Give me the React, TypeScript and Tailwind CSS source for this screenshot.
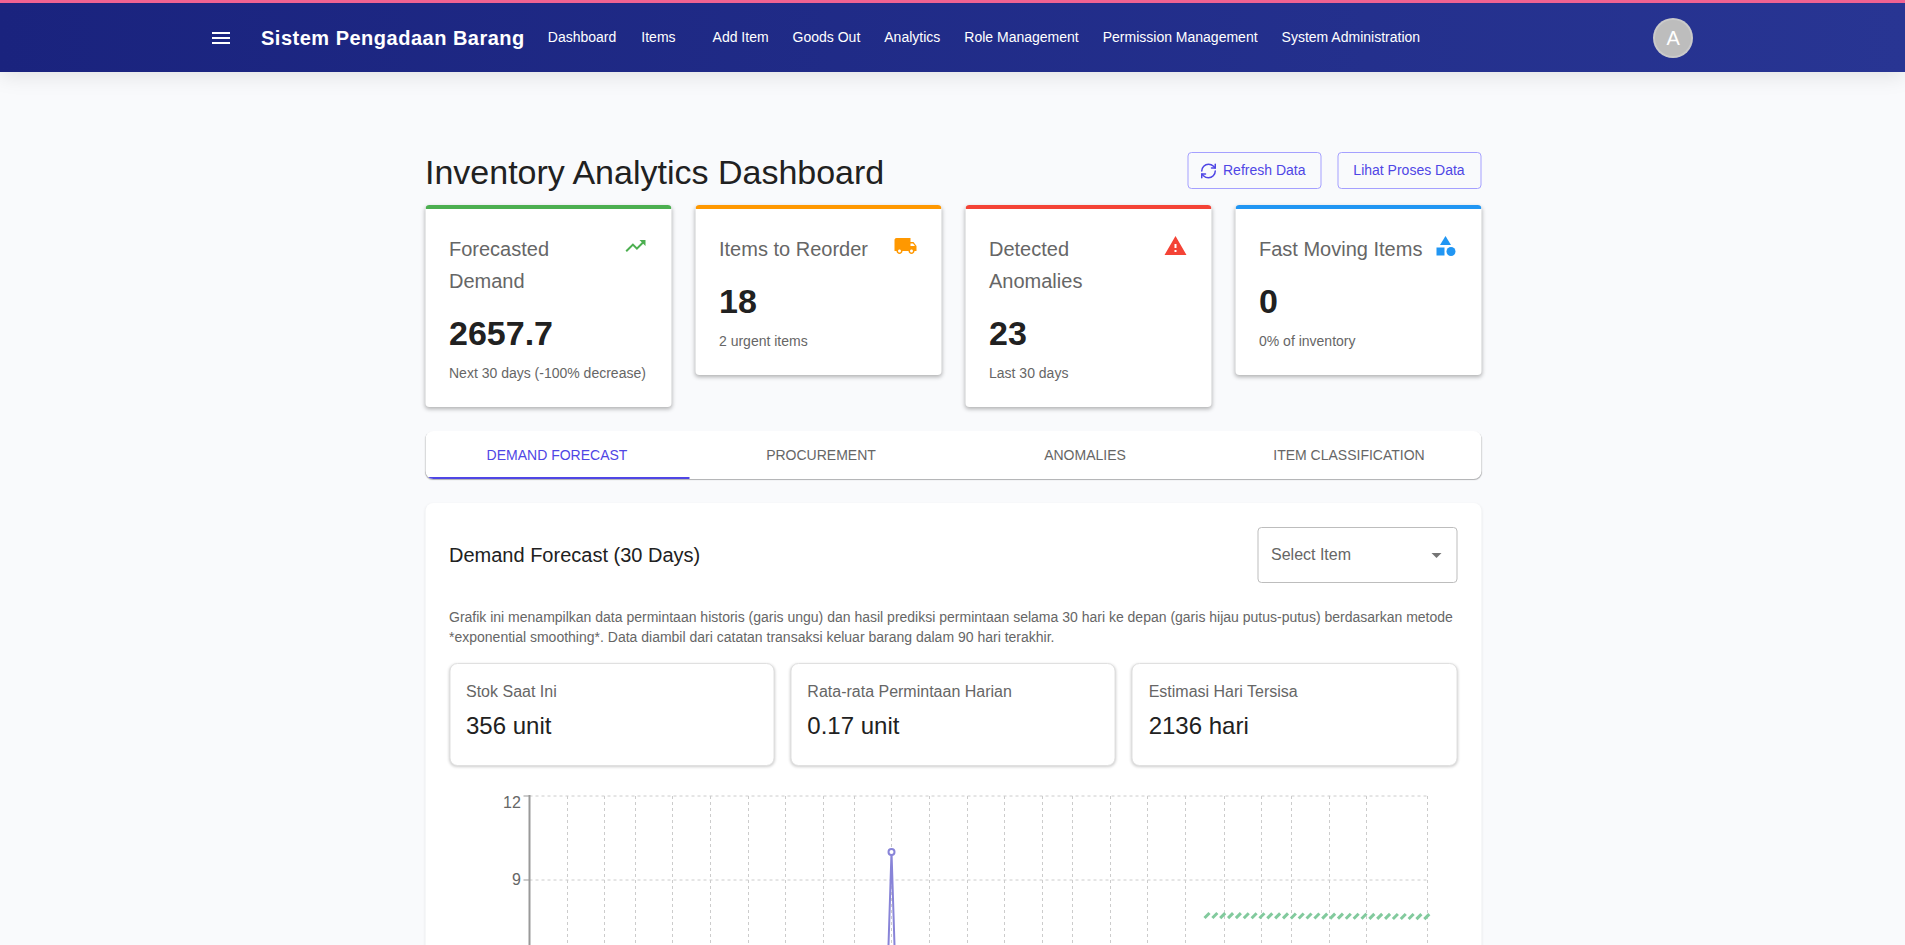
import React from "react";
import { MdMenu, MdTrendingUp, MdLocalShipping, MdWarning, MdCategory, MdArrowDropDown } from "react-icons/md";
import { RefreshCw } from "lucide-react";

const navItems = [
  { label: "Dashboard", className: "ml-[23px]" },
  { label: "Items", className: "ml-[25px]" },
  { label: "Add Item", className: "ml-[37px]" },
  { label: "Goods Out", className: "ml-[24px]" },
  { label: "Analytics", className: "ml-[24px]" },
  { label: "Role Management", className: "ml-[24px]" },
  { label: "Permission Management", className: "ml-[24px]" },
  { label: "System Administration", className: "ml-[24px]" },
];

const summaryCards = [
  {
    title: "Forecasted Demand",
    value: "2657.7",
    caption: "Next 30 days (-100% decrease)",
    border: "border-t-[#4caf50]",
    icon: <MdTrendingUp className="text-[#4caf50]" size={24} />,
  },
  {
    title: "Items to Reorder",
    value: "18",
    caption: "2 urgent items",
    border: "border-t-[#ff9800]",
    icon: <MdLocalShipping className="text-[#ff9800]" size={24} />,
  },
  {
    title: "Detected Anomalies",
    value: "23",
    caption: "Last 30 days",
    border: "border-t-[#f44336]",
    icon: <MdWarning className="text-[#f44336]" size={24} />,
  },
  {
    title: "Fast Moving Items",
    value: "0",
    caption: "0% of inventory",
    border: "border-t-[#2196f3]",
    icon: <MdCategory className="text-[#2196f3]" size={24} />,
  },
];

const tabs = ["Demand Forecast", "Procurement", "Anomalies", "Item Classification"];

const stats = [
  { label: "Stok Saat Ini", value: "356 unit" },
  { label: "Rata-rata Permintaan Harian", value: "0.17 unit" },
  { label: "Estimasi Hari Tersisa", value: "2136 hari" },
];

// x positions of the vertical grid lines, relative to the chart's left edge
const gridX = [
  38, 75, 106, 143, 181, 219, 256, 294, 325, 362, 400, 438, 475, 513, 543, 581, 618, 656, 695, 732,
  762, 800, 837, 898,
];

function ForecastChart() {
  const hatch = Array.from({ length: 29 }, (_, i) => 675 + i * 7.85);
  return (
    <svg width="960" height="300" viewBox="0 0 960 300" className="block overflow-visible">
      {gridX.map((x) => (
        <line key={x} x1={x} x2={x} y1={10} y2={300} stroke="#ccc" strokeDasharray="3 3" />
      ))}
      <line x1={0} x2={898} y1={10} y2={10} stroke="#ccc" strokeDasharray="3 3" />
      <line x1={0} x2={898} y1={94} y2={94} stroke="#ccc" strokeDasharray="3 3" />
      <line x1={0} x2={898} y1={178} y2={178} stroke="#ccc" strokeDasharray="3 3" />
      <line x1={0} x2={0} y1={9} y2={300} stroke="#999" strokeWidth={2} />
      <line x1={-6} x2={0} y1={10} y2={10} stroke="#999" />
      <line x1={-6} x2={0} y1={94} y2={94} stroke="#999" />
      <path d="M353 346 L362 66 L371 346" fill="none" stroke="#8884d8" strokeWidth={2} />
      <circle cx={362} cy={66} r={3} fill="#fff" stroke="#8884d8" strokeWidth={2} />
      {hatch.map((x, i) => (
        <line
          key={x}
          x1={x}
          x2={x + 5}
          y1={132 + i * 0.04}
          y2={127 + i * 0.04}
          stroke="#82ca9d"
          strokeWidth={3}
        />
      ))}
    </svg>
  );
}

export default function App() {
  return (
    <div className="h-[945px] overflow-hidden bg-[#f9fafc] font-['Liberation_Sans',Arial,sans-serif] text-[#212121]">
      <header className="relative z-10 h-[72px] border-t-[3px] border-t-[#f06292] bg-gradient-to-r from-[#1a237e] to-[#283593] text-white shadow-[0_4px_20px_rgba(0,0,0,0.1)]">
        <div className="flex h-[69px] items-center pl-[209px]">
          <MdMenu size={24} />
          <div className="ml-[28px] text-[20px] font-bold tracking-[0.5px]">Sistem Pengadaan Barang</div>
          <nav className="flex items-center text-[14px]">
            {navItems.map((item) => (
              <a key={item.label} className={item.className}>
                {item.label}
              </a>
            ))}
          </nav>
          <div className="ml-[233px] flex h-10 w-10 items-center justify-center rounded-full border-2 border-white/20 bg-[#bdbdbd] text-[20px]">
            A
          </div>
        </div>
      </header>

      <main className="mx-auto w-[1056px] translate-x-[0.5px] pt-[79px]">
        <div className="flex h-[54px] items-start justify-between">
          <h1 className="text-[34px] leading-[42px] font-normal">Inventory Analytics Dashboard</h1>
          <div className="mt-px flex gap-4 text-[14px] text-[#4f46e5]">
            <button className="flex h-[37px] w-[134px] items-center gap-1.5 rounded border border-[#a5a0ff] pl-[11px]">
              <RefreshCw size={18} />
              Refresh Data
            </button>
            <button className="h-[37px] w-[144px] rounded border border-[#a5a0ff]">Lihat Proses Data</button>
          </div>
        </div>

        <div className="grid grid-cols-4 items-start gap-6">
          {summaryCards.map((card) => (
            <div
              key={card.title}
              className={`rounded border-t-4 bg-white p-6 shadow-[0_2px_4px_rgba(0,0,0,0.3)] ${card.border}`}
            >
              <div className="mb-4 flex items-start justify-between">
                <div className="text-[20px] leading-8 text-[#666]">{card.title}</div>
                <div className="mt-px">{card.icon}</div>
              </div>
              <div className="mb-[10px] text-[34px] leading-[40px] font-bold">{card.value}</div>
              <div className="text-[14px] leading-5 text-[#666]">{card.caption}</div>
            </div>
          ))}
        </div>

        <div className="mt-6 grid h-[48px] grid-cols-4 overflow-hidden rounded-lg bg-white shadow-[0_1px_1px_rgba(0,0,0,0.3)]">
          {tabs.map((tab, i) => (
            <div
              key={tab}
              className={`flex items-center justify-center border-y-2 border-y-transparent text-[14px] uppercase ${
                i === 0 ? "border-b-[#4f46e5] text-[#4f46e5]" : "text-[#666]"
              }`}
            >
              {tab}
            </div>
          ))}
        </div>

        <section className="mt-6 rounded-lg bg-white p-6 shadow-[0_1px_3px_rgba(0,0,0,0.08)]">
          <div className="flex items-center justify-between">
            <h2 className="text-[20px] leading-8 font-normal">Demand Forecast (30 Days)</h2>
            <div className="flex h-14 w-[200px] items-center justify-between rounded border border-[#bdbdbd] pr-2 pl-[13px] text-[16px] text-[#666]">
              Select Item
              <MdArrowDropDown size={24} className="text-[#757575]" />
            </div>
          </div>
          <p className="mt-6 text-[14px] leading-5 text-[#666]">
            Grafik ini menampilkan data permintaan historis (garis ungu) dan hasil prediksi permintaan selama 30
            hari ke depan (garis hijau putus-putus) berdasarkan metode *exponential smoothing*. Data diambil dari
            catatan transaksi keluar barang dalam 90 hari terakhir.
          </p>
          <div className="mt-4 grid grid-cols-3 gap-4">
            {stats.map((s) => (
              <div
                key={s.label}
                className="h-[103px] rounded-lg border border-[#e0e0e0] bg-white px-4 pt-4 shadow-[0_1px_3px_rgba(0,0,0,0.2)]"
              >
                <div className="text-[16px] leading-6 text-[#666]">{s.label}</div>
                <div className="mt-[6px] text-[24px] leading-8">{s.value}</div>
              </div>
            ))}
          </div>
          <div className="relative mt-[20px] ml-[80px]">
            <span className="absolute top-[7px] -left-[26px] text-[16px] leading-5 text-[#666]">12</span>
            <span className="absolute top-[84px] -left-[17px] text-[16px] leading-5 text-[#666]">9</span>
            <ForecastChart />
          </div>
        </section>
      </main>
    </div>
  );
}
